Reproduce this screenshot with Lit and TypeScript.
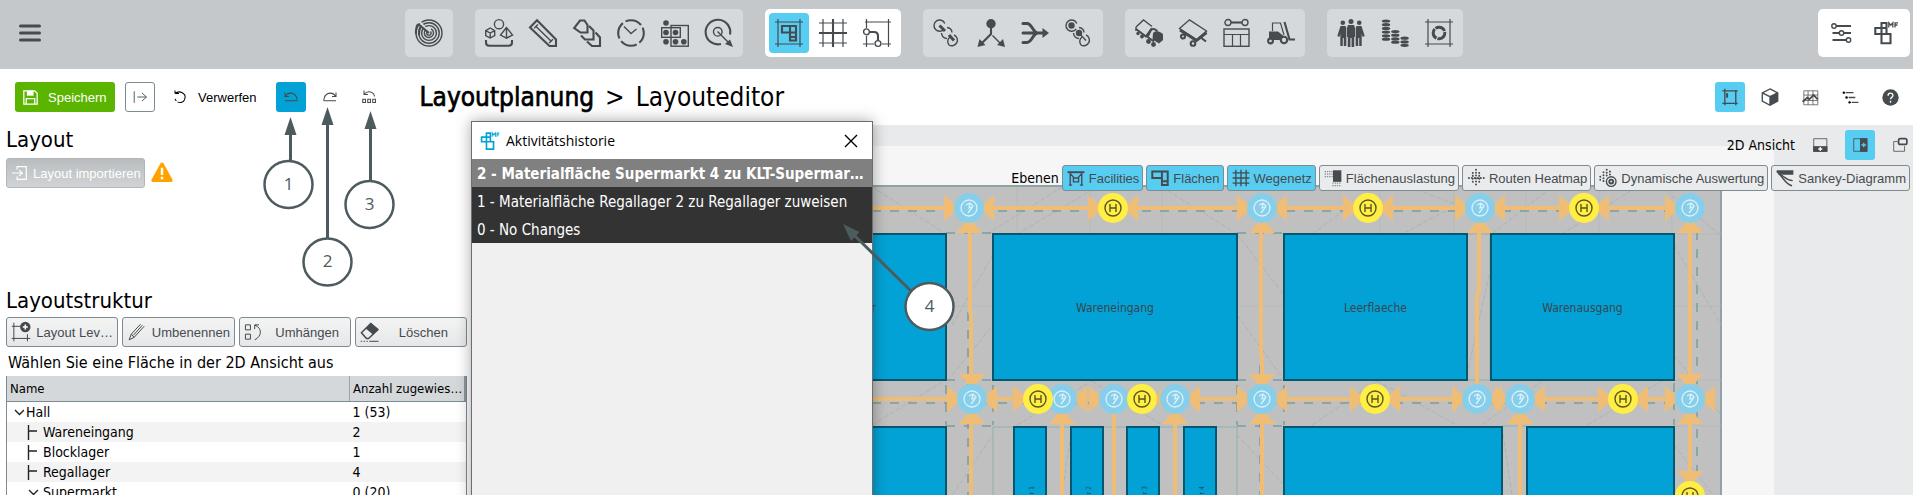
import { LitElement, html, svg, css, type TemplateResult } from "lit";
import { customElement, state, property } from "lit/decorators.js";
import { classMap } from "lit/directives/class-map.js";

/* ---------- icon set: all glyphs live on a 28 x 28 grid ---------- */

const frame = svg`<path class="thin" d="M3 0V28M25 0V28M0 3H28M0 25H28"/>`;

const coin = (x: number, ys: number[]) => ys.map(y => svg`<ellipse cx=${x} cy=${y} rx="4.200" ry="1.600"/>`);

const icons: Record<string, TemplateResult> = {
  menu: svg`<path class="heavy" stroke-linecap="round" d="M4.500 7H23.500M4.500 14H23.500M4.500 21H23.500"/>`,
  radar: svg`<circle cx="14" cy="14" r="13" /><circle cx="14" cy="14" r="10.200"/><circle cx="14" cy="14" r="7.400"/>
    <path d="M11.500 10A4.600 4.600 0 1 0 16 9.800M13 12A2.200 2.200 0 1 0 15.500 12.500"/>
    <path class="gap" d="M13 12.500L5 3"/><path class="bold" d="M14 14L3 5M3 5C1 8 0.800 11 1 15M6 7C4 10 4 13 4 16"/>`,
  shapes: svg`<circle cx="14" cy="5.200" r="4.600"/><path d="M0.700 11.600L5.200 9L9.700 11.600V16.600L5.200 19L0.700 16.600ZM0.700 11.600L5.200 14L9.700 11.600M5.200 14V19"/>
    <path d="M21.500 8.500L15.500 16L21.500 19.200L27.500 16ZM21.500 8.500V19"/><path class="bold" d="M1 21V23.500Q1 26.800 4.500 26.800H23.500Q27 26.800 27 23.500V21"/>`,
  ruler: svg`<path class="bold" d="M8 1.200L27 20.500V27H20.500L1 8.500Z"/><path d="M7 7.500L22 22M5.200 9.300L8.800 5.600M20.200 24L24 20.200"/>`,
  layers: svg`<path class="bold" d="M7 1.500H11.500L14.500 6V13.500H7.500L1.200 9Z"/><path class="bold" d="M16 7L20.500 11.500V20.500H12L8 16.500"/><path class="bold" d="M22.500 13.500L27 18.500V27H19L14 22.500"/>`,
  clock: svg`<circle class="bold" cx="14" cy="14" r="12.800" stroke-dasharray="17 3.100" stroke-dashoffset="6"/><path d="M7 7.500L14 14.500L19.500 10"/>`,
  stock: svg`<g class="fill"><circle cx="5" cy="4" r="2.800"/><circle cx="5" cy="13.500" r="2.800"/><circle cx="14.500" cy="13.500" r="2.800"/><circle cx="5" cy="22.800" r="2.800"/><circle cx="14.500" cy="22.800" r="2.800"/><circle cx="22.800" cy="22.800" r="2.800"/></g>
    <rect x="0.700" y="8.700" width="18.600" height="9.600"/><rect x="10" y="6.500" width="17.300" height="20.700"/>`,
  target: svg`<path class="bold" d="M25 15.500A12.300 12.300 0 1 0 16 25"/><circle cx="12.800" cy="12.800" r="4.300"/><path d="M12.500 12.500L23 23"/><path class="fill" d="M28 28L20 25L25 20.500Z"/>`,
  area: svg`${frame}<path class="bold" d="M7 7H21V21.500H15V13.500H7ZM15 7V13.500H21M15 18H21"/>`,
  grid: svg`<path class="thin" d="M4 0V28M24 0V28M0 4H28M0 24H28"/><path class="bold" d="M14 0V28M0 14H28"/>`,
  route: svg`<path class="thin" d="M2 3H28M3.500 0V9M3.500 17V28M25.500 0V28M0 25H11M19 25H28"/><circle cx="3.500" cy="12.800" r="2.900"/><circle cx="15" cy="24.500" r="2.900"/><path class="bold" d="M6.500 13H11Q15 13 15 17V21.500"/>`,
  chain: svg`<path d="M11.200 9.800A5.600 5.600 0 1 1 11.800 4.500"/><path d="M14 8.500A5.500 5.500 0 0 1 19 13.500M8.500 14A5.500 5.500 0 0 0 14 19.500M16 26A5.600 5.600 0 1 0 21 16"/><path d="M16 26A5.600 5.600 0 0 1 17 18"/><path class="heavy" d="M6.500 6.500L12 12M16 16L21 21.500"/>`,
  chainDots: svg`<path d="M11.200 9.800A5.600 5.600 0 1 1 11.800 4.500"/><path d="M14 8.500A5.500 5.500 0 0 1 19 13.500M8.500 14A5.500 5.500 0 0 0 14 19.500M16 26A5.600 5.600 0 1 0 21 16"/><path d="M16 26A5.600 5.600 0 0 1 17 18"/><g class="fill"><circle cx="6.500" cy="6.500" r="3.200"/><circle cx="14" cy="14" r="3.200"/></g><path d="M14 14L21 21.500"/>`,
  split: svg`<circle class="fill" cx="14" cy="4.800" r="4.700"/><path class="bold" d="M14 5V15L5 24"/><path d="M15.500 16.500L23 24"/><path class="fill" d="M0.500 28L2.500 20L8.500 26ZM28 28L26 20L20 26Z"/>`,
  merge: svg`<path class="heavy" stroke-linecap="round" d="M2 4.500H6C11 4.500 12 14 17 14H23M2 14H16M2 23.500H6C11 23.500 12 14 17 14"/><path class="fill" d="M28 14L21.500 9V19Z"/>`,
  truck: svg`<path d="M1 8L8.500 1L17 7.500M1 8V12"/><path class="bold" d="M1 10L11 17.500L17 9.500"/><path class="fill" d="M18 14Q20 11 25 13L28 15V21L24 24.500L17.500 20.500Z"/><path class="bold" d="M12.500 18L16 10.500Q20 9 22.500 12.500M12.500 18L19 22.500"/><g class="fill"><circle cx="3" cy="14.500" r="1.700"/><circle cx="7" cy="17.500" r="1.900"/><circle cx="13.500" cy="22.500" r="2.400"/><circle cx="18.500" cy="25.500" r="2.400"/></g>`,
  trailer: svg`<path d="M0.500 9.500L10.500 0.800L27.500 12L18 21Z"/><path class="heavy" d="M1 11L17.500 21.500L27.500 13.500"/><circle class="bold" cx="4" cy="17.500" r="2"/><circle class="bold" cx="14" cy="24.500" r="2.300"/><path class="bold" d="M21 18L27 22.500"/>`,
  shelf: svg`<circle cx="5" cy="3.500" r="3"/><circle cx="22" cy="3.500" r="3"/><path class="bold" d="M8 3.500H19"/><rect x="1" y="10" width="25" height="17.300"/><path class="thin" d="M1 15.500H26M9.500 15.500V27M17.500 15.500V27"/>`,
  forklift: svg`<path class="thin" d="M5.500 12V4H13.500L17 16"/><path class="fill" d="M2 12.500H11L16 16.500V21H2Z"/><path class="bold" d="M17.500 3L22.500 20.500H28"/><g class="disc"><circle class="bold" cx="3.500" cy="22" r="2.400"/><circle class="bold" cx="17" cy="21" r="3.200"/></g>`,
  people: svg`<g class="fill"><circle cx="14" cy="2.500" r="2.500"/><circle cx="5.800" cy="3.700" r="2.300"/><circle cx="22.200" cy="3.700" r="2.300"/><path d="M11 6H17L18 9V18H17.200V28H14.600V19H13.400V28H10.800V18H10V9Z"/><path d="M3.500 7H8.500L9.300 9V27H6.800V19H5.800V27H3.300V15L2.300 18L0.300 17Z"/><path d="M24.500 7H19.500L18.700 9V27H21.200V19H22.200V27H24.700V15L25.700 18L27.700 17Z"/></g>`,
  coins: svg`<g class="fill">${coin(5, [2, 5.700, 9.400, 13.100, 16.800, 20.200])}${coin(14.300, [12.500, 16.200, 19.900, 23.200])}${coin(23.600, [19.200, 22.900, 26.300])}</g>`,
  donut: svg`${frame}<circle class="heavy" cx="14" cy="14" r="5.800" stroke-dasharray="10.500 1"/>`,
  sliders: svg`<path class="bold" d="M8 7H23M4.500 14H11M16 14H23M4.500 21H18"/><circle cx="6" cy="7" r="2.200"/><circle cx="13.500" cy="14" r="2.200"/><circle cx="20.500" cy="21" r="2.200"/>`,
  logo: svg`<path class="bold" d="M9.500 24.300V4H14.500V9H3.300V15H18.500V24.300ZM14.500 9V15"/><path class="mini" d="M16.800 8.500V3.800L18.800 6.200L20.800 3.800V8.500M23 8.500V3.800H26M23 6H25.500"/>`,
  save: svg`<path class="bold" d="M3 3H21L25 7V25H3Z"/><path class="fill" d="M8 3H19V11H8Z"/><path class="bold" d="M7 25V16H21V25"/>`,
  arrowBar: svg`<path d="M5 5V23M10 14H24M17 7.500L24 14L17 20.500"/>`,
  discard: svg`<path class="bold" d="M4 7H12M4 7V1M4 7C14 -1 26 8 24 16C23 22 19 25 14 25" /><path class="bold" stroke-dasharray="5 3" d="M14 25C8 25 4 20 3.500 15"/>`,
  undo: svg`<path class="bold" d="M2 5V13H10M2.500 12.500C10 2 25 5 26.500 20.500M2 21.500H27"/>`,
  redo: svg`<path class="bold" d="M26 5V13H18M25.500 12.500C18 2 3 5 1.500 20.500M1 21.500H26"/>`,
  reset: svg`<path class="bold" d="M4 1V9H12M4.500 8.500C11 0 24 3 25 13"/><path class="bold" d="M1.500 18.500H7V25H1.500ZM11.500 18.500H17V25H11.500ZM21.500 18.500H27V25H21.500Z"/>`,
  import: svg`<path class="bold" d="M9 8V3H25V25H9V20M0 14H18M12.500 9L18 14L12.500 19"/>`,
  plan: svg`<path d="M6 1V27M23 3V27M2 4.500H26M2 24H26" class="bold"/><path class="fill" d="M8 8H11V15H8Z"/>`,
  cube: svg`<path class="bold" d="M14 1.500L26 7.500V20.500L14 27L2 20.500V7.500ZM2 7.500L14 13.500L26 7.500M14 13.500V27"/><path class="fill" d="M14 13.500L26 7.500V20.500L14 27Z"/>`,
  chart: svg`<path class="thin" d="M3 3H26V26H3ZM10 3V26M18 3V26M3 10H26M3 19H26"/><path class="heavy" d="M1 21L9 14L12 17L19 10L26 17"/>`,
  tree: svg`<path class="bold" d="M6 6H19M11 14H22M16 22H27"/><g class="ink"><circle cx="3" cy="6" r="2"/><circle cx="7.500" cy="14" r="2"/><circle cx="12.500" cy="22" r="2"/></g>`,
  help: svg`<circle class="fill" cx="14" cy="14" r="13.500"/><path class="paper" d="M10 11C10 5.500 18 5.500 18 10.500C18 14 14 13.500 14 17M14 19.500V22.500"/>`,
  splitBottom: svg`<path d="M3 3H26V25H3Z"/><path class="fill" d="M2 16H27V26H2Z"/><path class="paper" d="M14.500 17.500V24.500M11 21H18"/>`,
  splitRight: svg`<path d="M3 3H26V25H3Z"/><path class="fill" d="M14 2H27V26H14Z"/><path class="paper sky" d="M20.500 10V18M16.500 14H24.500"/>`,
  windowed: svg`<path d="M10 8H3V25H22V16"/><rect class="heavy" x="11.500" y="3" width="14.500" height="10" rx="3"/>`,
  table: svg`<path class="heavy" d="M1 5H27"/><path class="bold" d="M5 6V25M23 6V25M3 25H8M20 25H25M6 8L11 14M22 8L17 14M10 14H18V20H10Z"/>`,
  flaeche: svg`<path class="heavy" d="M2 4H26V25H17V14H2ZM17 4V14M17 19H26"/>`,
  net: svg`<path class="bold" d="M6 1V27M14 1V27M22 1V27M1 6H27M1 14H27M1 22H27"/>`,
  usage: svg`<path class="halftone" d="M1 4H14M1 8H14M1 12H14M13 22H27M13 26H27"/><path class="fill" d="M14 2H27V20H14Z"/>`,
  heat: svg`<g class="dots"><path d="M14 1V28M9 6V24M19 6V24M3 14H28"/></g>`,
  dynamic: svg`<g class="dots"><path d="M12 1V14M7 5V22M2 12V18M17 4V10"/></g><circle class="bold" cx="19" cy="19.500" r="7.500"/><circle class="heavy" cx="19" cy="19.500" r="3"/>`,
  sankey: svg`<path class="fill" d="M1 2H27V9H10L1 6Z"/><path class="bold" d="M3 7C12 9 14 18 26 18M3 7C10 10 14 24 25 26"/>`,
  addLevel: svg`<path d="M4 1V27M1 6H14M1 23H27M23 17V27"/><circle class="fill" cx="20" cy="7" r="7.300"/><path class="paper" d="M20 3.500V10.500M16.500 7H23.500"/>`,
  rename: svg`<path d="M3 25L6 17L19 3M3 25L10 21.500L24 6M6 17L10 21.500M9 18.500L21.500 4.500"/>`,
  rehang: svg`<path d="M2 4H9V11H2ZM2 17H9V24H2ZM15 10V4H21M15.500 4.500C26 9 25 20 15 25"/>`,
  erase: svg`<path class="bold" d="M2 15L15 2L25 10.500L12 23H9Z"/><path class="fill" d="M8 9L15.500 1.500L26 11L18.500 18Z"/><path d="M13 27H26"/><path stroke-dasharray="2 2" d="M1 27H12"/>`,
};

const iconCss = css`
  svg.icon { display: block; flex: none; fill: none; stroke: currentColor; stroke-width: 1.4; overflow: visible; }
  .icon .thin { stroke-width: 1.2; }
  .icon .bold { stroke-width: 2.1; }
  .icon .heavy, .icon .heavy path { stroke-width: 3; }
  .icon .fill, .icon .fill * { fill: currentColor; stroke: none; }
  .icon .ink { fill: #000; stroke: none; }
  .icon .gap { stroke: #d5d9dc; stroke-width: 2; }
  .icon .disc { fill: #d5d9dc; }
  .icon .paper { stroke: #fff; stroke-width: 2.2; }
  .icon .sky { stroke: #58cdf2; }
  .icon .mini { stroke-width: 1.3; }
  .icon .halftone { stroke-width: 2; stroke-dasharray: 2 1.5; opacity: 0.6; }
  .icon .dots path { stroke-width: 3; stroke-linecap: round; stroke-dasharray: 0.1 4.5; }
`;

const icon = (name: string, size = 28) =>
  html`<svg class="icon" width=${size} height=${size} viewBox="0 0 28 28" aria-hidden="true">${icons[name]}</svg>`;

const FONT = css`"DejaVu Sans Condensed", "Noto Sans", sans-serif`;

/* ---------- layout map ---------- */

type Pt = [number, number];
const TOP = 83;
const LOW = 274;

const blocks: { x: number; y: number; w: number; h: number; label?: string }[] = [
  { x: 180, y: 109, w: 294, h: 146 },
  { x: 521, y: 109, w: 244, h: 146, label: "Wareneingang" },
  { x: 812, y: 109, w: 183, h: 146, label: "Leerflaeche" },
  { x: 1019, y: 109, w: 183, h: 146, label: "Warenausgang" },
  { x: 180, y: 302, w: 294, h: 120 },
  { x: 812, y: 302, w: 218, h: 120 },
  { x: 1055, y: 302, w: 147, h: 120 },
];
const racks: Pt[] = [[542, 1], [599, 2], [655, 3], [712, 4]];

const junctions: Pt[] = [
  [497, TOP], [790, TOP], [1008, TOP], [1218, TOP],
  [500, LOW], [590, LOW], [642, LOW], [703, LOW], [790, LOW], [1005, LOW], [1048, LOW], [1218, LOW],
];
const stops: Pt[] = [[641, TOP], [896, TOP], [1112, TOP], [566, LOW], [670, LOW], [903, LOW], [1151, LOW], [1218, 371]];

const heads: [number, number, number][] = [
  // x, y, rotation of an arrow head pointing at a node from its left side
  ...[497, 641, 790, 896, 1008, 1112, 1218].map((x): [number, number, number] => [x, TOP, 0]),
  ...[497, 641, 790, 896, 1008, 1112].map((x): [number, number, number] => [x, TOP, 180]),
  ...[500, 566, 642, 790, 903, 1005, 1048, 1151, 1218].map((x): [number, number, number] => [x, LOW, 0]),
  ...[500, 590, 670, 703, 790, 903, 1005, 1151, 1218, 1048].map((x): [number, number, number] => [x, LOW, 180]),
  ...[497, 790, 1008, 1218].map((x): [number, number, number] => [x, TOP, 270]),
  ...[500, 790, 1218].map((x): [number, number, number] => [x, LOW, 90]),
  ...[500, 590, 703, 790, 1048, 1218].map((x): [number, number, number] => [x, LOW, 270]),
  [1218, 371, 90],
].map(([x, y, r]): [number, number, number] => [x, y, r === 90 ? 90 : r === 270 ? 270 : r]);

@customElement("layout-map")
export class LayoutMap extends LitElement {
  static styles = css`
    :host { display: block; }
    .map { display: block; }
    .hall { fill: #c0c0c0; stroke: #8fa3a6; stroke-width: 2; }
    .faint { fill: none; stroke: #b6b8b8; stroke-width: 1; }
    .hatch { fill: none; stroke: #b0b2b2; stroke-width: 1; stroke-dasharray: 5 2; }
    .outline { fill: none; stroke: #8fb0b0; stroke-width: 1; }
    .lane { fill: none; stroke: #7d9c9e; stroke-width: 1.5; stroke-dasharray: 9 9; }
    .block { fill: #03a2d6; stroke: #05566f; stroke-width: 2; }
    .way { fill: none; stroke: #f0bd76; stroke-width: 4; }
    .head { fill: #f0bd76; }
    .junction { fill: #87ceea; }
    .stop { fill: #ffee44; }
    .glyph { fill: none; stroke: #d9f1fb; stroke-width: 1.3; }
    .sign { fill: none; stroke: #5c5620; stroke-width: 1.4; }
    .label { font: 12px ${FONT}; fill: #37474f; text-anchor: middle; }
    .end { text-anchor: end; }
    .tiny { font: 7px ${FONT}; fill: #1f4f63; text-anchor: end; }
  `;

  render() {
    return html`<svg class="map" width="1302" height="370" viewBox="0 0 1302 370" role="img" aria-label="2D Ansicht">
      <rect class="hall" x="-10" y="61" width="1259" height="400" />
      <path class="faint" d="M545 62V109M618 62V109M690 62V109M908 62V109M982 62V109M1054 62V109M1127 62V109M1200 62V109M1200 109H1249M1202 181H1249M1202 255H1249M1202 301H1249M474 181H521M765 181H812" />
      <path class="hatch" d="M400 62L474 109M515 109L590 62M545 109L625 62M690 62L765 109M840 109L905 62M938 62L985 80L930 109M1020 109L1080 62M1090 109L1165 62M1190 62L1247 109M480 200L521 130M480 250L521 200M765 109L812 170M765 190L812 255M995 250L1017 150M1202 120L1249 200M1202 230L1249 290M400 300L474 255M545 300L620 256M620 256L690 300M840 300L905 256M905 256L985 300M1010 300L1070 256M1115 300L1190 256M480 370L521 310M765 310L812 360M600 302L590 370M655 302L665 370M1030 302L1040 370M1202 320L1249 380" />
      <path class="outline" d="M521 302H765V370M521 302V370M995 109H1018M995 255H1018M1018 109V255M1030 301H1054" />
      <path class="lane" d="M400 86H1218M400 278H1218M474 108H521M765 108H812M474 255H521M765 255H812M474 301H521M765 301H812M474 260V300M521 260V300M765 260V300M812 260V300M1202 258V300M496 187V370M788 240V370M1225 106V350" />
      ${blocks.map(b => svg`<rect class="block" x=${b.x} y=${b.y} width=${b.w} height=${b.h} />`)}
      ${blocks.filter(b => b.label).map(b => svg`<text class="label" x=${b.x + b.w / 2} y="187">${b.label}</text>`)}
      <text class="label end" x="404" y="187">Blocklager</text>
      ${racks.map(([x, n]) => svg`<rect class="block" x=${x} y="302" width="32" height="120" />
        <text class="tiny" transform="translate(${x + 20} 361) rotate(-90)">Regallager ${n}</text>`)}
      <path class="way" d="M400 83H1218M400 274H600M590 274H1218M498 83V187L499 190V370M789 83V230L790 233V370M1007 83V165L1005 170V274M1218 83V371M590 274V370M642 274V370M703 274V370M1048 274V370" />
      ${heads.map(([x, y, r]) => svg`<path class="head" d="M-25 -13L-10 0L-25 13Z" transform="translate(${x} ${y}) rotate(${r})" />`)}
      ${junctions.map(([x, y]) => svg`<g transform="translate(${x} ${y})">
        <circle class="junction" r="15" /><circle class="glyph" r="8" />
        <path class="glyph" d="M-3 -3L1 -5L4 -2L2 1L-1 5M1 -5L0 0L3 -1" /></g>`)}
      ${stops.map(([x, y]) => svg`<g transform="translate(${x} ${y})">
        <circle class="stop" r="15" /><circle class="sign" r="8" />
        <path class="sign" d="M-3 -4V4M3 -4V4M-3 0H3" /></g>`)}
    </svg>`;
  }
}

/* ---------- history dialog ---------- */

@customElement("history-dialog")
export class HistoryDialog extends LitElement {
  @property({ type: Array }) entries: string[] = [];
  @state() private current = 0;

  static styles = [iconCss, css`
    :host { display: flex; flex-direction: column; box-sizing: border-box; border: 1px solid #6c6e70; background: #f0f0f0; box-shadow: 0 0 14px rgba(0, 0, 0, 0.35); }
    .bar { display: flex; align-items: center; height: 37px; padding: 0 9px 0 7px; gap: 5px; background: #fff; }
    .brand { color: #03a2d6; }
    .title { flex: 1; margin: 0; font: 14px "Open Sans", sans-serif; color: #000; }
    .close { display: grid; place-items: center; width: 24px; height: 24px; padding: 0; border: 0; background: none; color: #000; }
    .list { list-style: none; margin: 0; padding: 0; }
    .entry { display: block; width: 100%; height: 28px; padding: 2px 3px 0 5px; border: 0; background: #333; color: #fff; text-align: left; font: 15px ${FONT}; white-space: nowrap; overflow: hidden; text-overflow: ellipsis; }
    .current { background: #808080; font-weight: bold; }
  `];

  render() {
    return html`
      <div class="bar">
        <span class="brand">${icon("logo", 22)}</span>
        <h2 class="title">Aktivitätshistorie</h2>
        <button class="close" aria-label="Schließen"><svg class="icon" width="14" height="14" viewBox="0 0 14 14"><path d="M1 1L13 13M13 1L1 13" /></svg></button>
      </div>
      <ul class="list">
        ${this.entries.map((text, i) => html`<li><button class=${classMap({ entry: true, current: i === this.current })} @click=${() => (this.current = i)}>${text}</button></li>`)}
      </ul>`;
  }
}

/* ---------- application shell ---------- */

const groups: { names: string[]; open?: boolean }[] = [
  { names: ["radar"] },
  { names: ["shapes", "ruler", "layers", "clock", "stock", "target"] },
  { names: ["area", "grid", "route"], open: true },
  { names: ["chain", "split", "merge", "chainDots"] },
  { names: ["truck", "trailer", "shelf", "forklift"] },
  { names: ["people", "coins", "donut"] },
];

const layers: [string, string, boolean][] = [
  ["table", "Facilities", true],
  ["flaeche", "Flächen", true],
  ["net", "Wegenetz", true],
  ["usage", "Flächenauslastung", false],
  ["heat", "Routen Heatmap", false],
  ["dynamic", "Dynamische Auswertung", false],
  ["sankey", "Sankey-Diagramm", false],
];

const rows: [string, string, "root" | "leaf" | "branch"][] = [
  ["Hall", "1 (53)", "root"],
  ["Wareneingang", "2", "leaf"],
  ["Blocklager", "1", "leaf"],
  ["Regallager", "4", "leaf"],
  ["Supermarkt", "0 (20)", "branch"],
];

@customElement("app-root")
export class AppRoot extends LitElement {
  static styles = [iconCss, css`
    :host { display: flex; flex-direction: column; position: relative; height: 100vh; overflow: hidden; background: #fff; color: #000; font: 14px ${FONT}; }
    button { box-sizing: border-box; display: flex; align-items: center; margin: 0; padding: 0; border: 0; border-radius: 3px; background: none; font: 13px "Liberation Sans", Arial, sans-serif; color: #464b4f; white-space: nowrap; }
    h1, h2 { margin: 0; font-weight: normal; }

    .header { display: flex; flex: none; align-items: flex-start; height: 69px; background: #c4c8cb; color: #464b4f; }
    .burger { width: 50px; height: 66px; padding-left: 16px; }
    .groups { display: flex; flex: 1; justify-content: center; gap: 22px; padding-top: 9px; }
    .group { display: flex; box-sizing: border-box; gap: 4px; height: 48px; padding: 4px; border-radius: 5px; background: #d5d9dc; }
    .tool { justify-content: center; width: 40px; height: 40px; border-radius: 4px; }
    .open { background: #fff; }
    .account { margin: 9px 3px 0 0; }
    .active { background: #58cdf2; }

    .toolbar { display: flex; flex: none; align-items: center; height: 56px; padding: 0 8px 0 15px; gap: 10px; box-sizing: border-box; }
    .save { height: 30px; width: 100px; padding-left: 7px; gap: 9px; background: #5ab400; color: #fff; }
    .square { justify-content: center; width: 30px; height: 30px; }
    .framed { border: 1px solid #7d8c92; }
    .discard { height: 30px; padding: 0 9px 0 8px; gap: 11px; color: #000; }
    .pressed { background: #03a2d6; }
    .redo { width: 28px; }
    .crumbs { display: flex; flex: 1; gap: 11px; padding-left: 26px; font-size: 26px; line-height: 34px; white-space: nowrap; }
    .crumbs b { font-weight: normal; -webkit-text-stroke: 0.7px #000; }

    .main { display: flex; flex: 1; min-height: 0; }
    .side { flex: none; box-sizing: border-box; width: 472px; padding: 1px 5px 0 6px; }
    .heading { font-size: 22px; line-height: 28px; }
    .import { display: flex; align-items: flex-start; gap: 6px; height: 133px; padding-top: 4px; box-sizing: border-box; }
    .importer { height: 30px; padding: 0 3px 0 5px; gap: 5px; border: 1px solid #b0b6b9; background: linear-gradient(#b9bdbf, #d0d4d6); color: #fff; }
    .warn { display: block; margin-top: 4px; }
    .actions { display: grid; grid-template-columns: repeat(4, 1fr); gap: 4px; padding-top: 2px; }
    .action { height: 30px; min-width: 0; padding: 0 3px 0 4px; gap: 4px; border: 1px solid #7d8c92; background: linear-gradient(#f4f4f4, #e6e7e8); }
    .caption { flex: 1; text-align: center; }
    .hint { margin: 0; padding: 4px 2px 1px; font-size: 16px; line-height: 24px; }

    .areas { width: 100%; table-layout: fixed; border-collapse: collapse; border: 1px solid #7d8c92; border-top: 0; }
    .areas th { height: 25px; padding: 0 3px; border-bottom: 1px solid #7d8c92; background: #d4d8da; text-align: left; font-size: 13px; font-weight: normal; white-space: nowrap; }
    .areas th + th { width: 110px; border-left: 1px solid #9aa5a9; box-shadow: inset -2px 0 #8a969b; }
    .areas td { height: 20px; padding: 0 3px; line-height: 20px; }
    .areas tr:nth-child(even) td { background: #f3f3f3; }
    .cell { display: flex; align-items: center; gap: 2px; padding-left: 3px; }
    .leaf, .branch { padding-left: 17px; }
    .twig { display: block; flex: none; fill: none; stroke: #222; stroke-width: 1.4; }

    .work { position: relative; flex: 1; min-width: 0; background: #e9eaeb; }
    .stage { position: absolute; inset: 21px 139px 0 0; overflow: hidden; background: #f6f6f6; }
    .plan { position: absolute; top: -21px; left: 0; }
    .overlay { position: relative; display: flex; flex-direction: column; align-items: flex-end; gap: 5px; padding: 5px 3px 0 0; }
    .views { display: flex; align-items: center; gap: 10px; }
    .views .square:last-child { margin-right: -5px; }
    .layers { display: flex; align-items: center; gap: 3px; }
    .layer { height: 26px; padding: 0 3px 0 4px; gap: 4px; border: 1px solid #7d8c92; background: #eaebec; }
    .on { background: #58cdf2; }

    .dialog { position: absolute; top: 121px; left: 471px; bottom: -20px; width: 402px; }
    .notes { position: absolute; top: 0; left: 0; pointer-events: none; fill: #4d5b5f; stroke: #4d5b5f; stroke-width: 3; }
    .notes ellipse { fill: #fff; stroke-width: 2.5; }
    .notes path { fill: none; }
    .notes polygon { stroke: none; }
    .notes text { font: 17px "Open Sans", sans-serif; stroke: none; text-anchor: middle; }
  `];

  @state() private tool = "area";

  private tools(names: string[]) {
    return names.map(n => html`<button class=${classMap({ tool: true, active: n === this.tool })} aria-label=${n} @click=${() => (this.tool = n)}>${icon(n)}</button>`);
  }

  private twig(kind: string) {
    return kind === "leaf"
      ? html`<svg class="twig" width="14" height="20" viewBox="0 0 14 20"><path d="M1.500 3V18M1.500 9H10" /></svg>`
      : html`<svg class="twig" width="${kind === "root" ? 11 : 14}" height="20" viewBox="0 0 ${kind === "root" ? 11 : 14} 20"><path d="M2 8L6.500 12.500L11 8" /></svg>`;
  }

  render() {
    return html`
      <header class="header">
        <button class="burger" aria-label="Menü">${icon("menu", 28)}</button>
        <nav class="groups">
          ${groups.map(g => html`<div class=${classMap({ group: true, open: !!g.open })}>${this.tools(g.names)}</div>`)}
        </nav>
        <div class="group open account">${this.tools(["sliders", "logo"])}</div>
      </header>

      <div class="toolbar">
        <button class="save">${icon("save", 17)}Speichern</button>
        <button class="square framed" aria-label="Exportieren">${icon("arrowBar", 18)}</button>
        <button class="discard">${icon("discard", 14)}Verwerfen</button>
        <button class="square pressed" aria-label="Rückgängig">${icon("undo", 14)}</button>
        <button class="square redo" aria-label="Wiederholen">${icon("redo", 14)}</button>
        <button class="square" aria-label="Historie">${icon("reset", 14)}</button>
        <h1 class="crumbs"><b>Layoutplanung</b><span>&gt;</span><span>Layouteditor</span></h1>
        <button class="square active" aria-label="2D">${icon("plan", 18)}</button>
        <button class="square" aria-label="3D">${icon("cube", 18)}</button>
        <button class="square" aria-label="Diagramm">${icon("chart", 17)}</button>
        <button class="square" aria-label="Struktur">${icon("tree", 17)}</button>
        <button class="square" aria-label="Hilfe">${icon("help", 17)}</button>
      </div>

      <div class="main">
        <aside class="side">
          <h2 class="heading">Layout</h2>
          <div class="import">
            <button class="importer">${icon("import", 16)}Layout importieren</button>
            <svg class="warn" width="22" height="21" viewBox="0 0 23 21" role="img" aria-label="Warnung"><path fill="#ffa200" d="M9.800 1Q11.500 -1 13.200 1L22.500 18Q23 20.500 21 20.500H2Q0 20.500 0.500 18Z" /><path stroke="#fff" stroke-width="2.600" d="M11.500 5.500V13M11.500 15V17.500" /></svg>
          </div>
          <h2 class="heading">Layoutstruktur</h2>
          <div class="actions">
            ${[["addLevel", "Layout Lev…"], ["rename", "Umbenennen"], ["rehang", "Umhängen"], ["erase", "Löschen"]].map(
              ([i, t]) => html`<button class="action">${icon(i, 20)}<span class="caption">${t}</span></button>`)}
          </div>
          <p class="hint">Wählen Sie eine Fläche in der 2D Ansicht aus</p>
          <table class="areas">
            <thead><tr><th>Name</th><th>Anzahl zugewies…</th></tr></thead>
            <tbody>
              ${rows.map(([name, count, kind]) => html`<tr><td><span class="cell ${kind}">${this.twig(kind)}${name}</span></td><td>${count}</td></tr>`)}
            </tbody>
          </table>
        </aside>

        <section class="work">
          <div class="stage"><layout-map class="plan"></layout-map></div>
          <div class="overlay">
            <div class="views">
              <span>2D Ansicht</span>
              <button class="square" aria-label="Unten teilen">${icon("splitBottom", 16)}</button>
              <button class="square active" aria-label="Rechts teilen">${icon("splitRight", 16)}</button>
              <button class="square" aria-label="Fenster">${icon("windowed", 16)}</button>
            </div>
            <div class="layers">
              <span>Ebenen</span>
              ${layers.map(([i, t, on]) => html`<button class=${classMap({ layer: true, on })} aria-pressed=${on}>${icon(i, 18)}${t}</button>`)}
            </div>
          </div>
        </section>
      </div>

      <history-dialog class="dialog" .entries=${[
        "2 - Materialfläche Supermarkt 4 zu KLT-Supermarkt zuweisen",
        "1 - Materialfläche Regallager 2 zu Regallager zuweisen",
        "0 - No Changes",
      ]}></history-dialog>

      <svg class="notes" width="980" height="340" viewBox="0 0 980 340">
        <path d="M290.500 162V133M327.500 239V122M370.500 182V126M911 291L854 235" />
        <polygon points="290.500,117 296.500,135 284.500,135" />
        <polygon points="327.500,107 333.500,125 321.500,125" />
        <polygon points="370.500,111 376.500,129 364.500,129" />
        <polygon points="843,224 859.500,232 851,241" />
        ${[[288.5, 184.5, 1], [327.5, 262, 2], [369.5, 204.5, 3], [929.5, 306.5, 4]].map(
          ([x, y, n]) => svg`<ellipse cx=${x} cy=${y} rx="24" ry="23.500" /><text x=${x} y=${y + 5}>${n}</text>`)}
      </svg>
    `;
  }
}
